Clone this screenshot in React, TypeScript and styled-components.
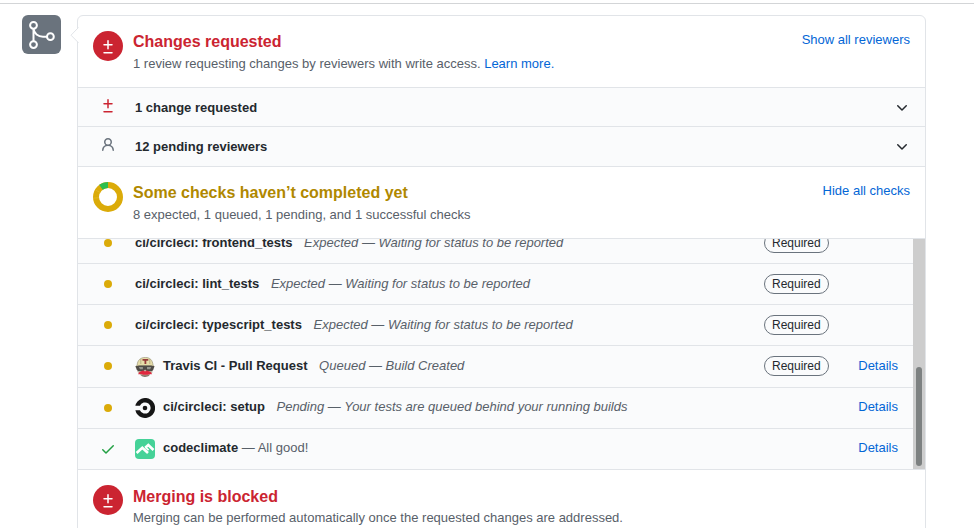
import React from "react";
import styled, { createGlobalStyle } from "styled-components";

const GlobalStyle = createGlobalStyle`
  body {
    margin: 0;
    background: #fff;
    color: #24292e;
    font: 13px/20px "Liberation Sans", Arial, sans-serif;
    overflow: hidden;
  }
  *, *::before, *::after { box-sizing: border-box; }
  svg { display: block; flex: none; }
`;

const Page = styled.main`
  height: 528px;
  padding-top: 3px;
  overflow: hidden;
`;

const TopRule = styled.div`
  height: 1px;
  background: #d3d5d7;
`;

const Timeline = styled.div`
  display: flex;
  align-items: flex-start;
  padding: 11px 48px 0 22px;
`;

const MergeBadge = styled.div`
  width: 39px;
  height: 39px;
  margin-right: 16px;
  border-radius: 6px;
  background: #6a737d;
`;

const Box = styled.section`
  position: relative;
  width: 849px;
  height: 600px;
  flex: none;
  border: 1px solid #e1e4e8;
  border-radius: 6px;
`;

const Caret = styled.svg`
  position: absolute;
  left: -8px;
  top: 11px;
`;

const Header = styled.header<{ $height: number }>`
  display: flex;
  height: ${(p) => p.$height}px;
  padding: 15px 15px 0;
  border-bottom: 1px solid #e1e4e8;
`;

const StatusCircle = styled.div`
  display: flex;
  justify-content: center;
  width: 30px;
  height: 30px;
  padding-top: 8px;
  border-radius: 50%;
  background: #cb2431;
  color: #fff;
`;

const HeaderText = styled.div`
  flex: 1;
  margin-left: 10px;
`;

const Title = styled.h3<{ $color: string; $line?: number }>`
  height: 22px;
  margin: 0;
  font-size: 16px;
  line-height: ${(p) => p.$line ?? 22}px;
  font-weight: 700;
  color: ${(p) => p.$color};
`;

const Subtitle = styled.p`
  margin: 0;
  line-height: 21px;
  color: #586069;
`;

const Link = styled.a`
  color: #0366d6;
  text-decoration: none;
`;

const HeaderLink = styled(Link)`
  line-height: 18px;
`;

const ReviewRow = styled.div<{ $height: number }>`
  display: flex;
  height: ${(p) => p.$height}px;
  padding: 10px 15px 0 22px;
  background: #fafbfc;
  border-bottom: 1px solid #e1e4e8;
`;

const ReviewLabel = styled.strong`
  flex: 1;
  margin-left: 19px;
`;

const ChevronSlot = styled.span`
  padding-top: 1px;
`;

const ChecksViewport = styled.div`
  display: flex;
  height: 231px;
  overflow: hidden;
  border-bottom: 1px solid #e1e4e8;
`;

const CheckList = styled.div`
  display: flex;
  flex: 1;
  flex-direction: column;
  justify-content: flex-end;
  background: #fafbfc;
`;

const CheckRow = styled.div<{ $height: number; $line: number }>`
  display: flex;
  flex: none;
  height: ${(p) => p.$height}px;
  padding: 10px 15px 0 22px;
  line-height: ${(p) => p.$line}px;
  border-bottom: 1px solid #e1e4e8;
  &:last-child { border-bottom: 0; }
`;

const StateIcon = styled.span`
  width: 16px;
  margin-right: 19px;
  padding-top: 2px;
`;

const Avatar = styled.span<{ $drop: number }>`
  width: 20px;
  margin-right: 8px;
  padding-top: ${(p) => p.$drop}px;
`;

const CheckText = styled.span`
  flex: 1;
  color: #586069;
  white-space: pre;
`;

const CheckName = styled.strong`
  color: #24292e;
`;

const Description = styled.em`
  margin-left: 11.6px;
`;

const Required = styled.span`
  width: 65px;
  height: 20px;
  padding-left: 7px;
  border: 1px solid #6a737d;
  border-radius: 10px;
  font-size: 12px;
  line-height: 18px;
`;

const DetailsSlot = styled.span`
  width: 69px;
  text-align: right;
`;

const ScrollTrack = styled.div`
  width: 12px;
  padding: 128px 0 0 3px;
  background: #cdcdcd;
`;

const ScrollThumb = styled.div`
  width: 6px;
  height: 99px;
  border-radius: 3px;
  background: #7d8181;
`;

const Octicon = ({ d, color = "currentColor" }: { d: string; color?: string }) => (
  <svg width="16" height="16" viewBox="0 0 16 16" fill={color}>
    <path fillRule="evenodd" d={d} />
  </svg>
);

const DIFF =
  "M8.75 1.75a.75.75 0 00-1.5 0V5H4a.75.75 0 000 1.5h3.25v3.25a.75.75 0 001.5 0V6.5H12A.75.75 0 0012 5H8.75V1.75zM4 13a.75.75 0 000 1.5h8a.75.75 0 100-1.5H4z";
const PERSON =
  "M10.5 5a2.5 2.5 0 11-5 0 2.5 2.5 0 015 0zm.061 3.073a4 4 0 10-5.123 0 6.004 6.004 0 00-3.431 5.142.75.75 0 001.498.07 4.5 4.5 0 018.99 0 .75.75 0 101.498-.07 6.005 6.005 0 00-3.432-5.142z";
const CHEVRON =
  "M12.78 6.22a.75.75 0 010 1.06l-4.25 4.25a.75.75 0 01-1.06 0L3.22 7.28a.75.75 0 011.06-1.06L8 9.94l3.72-3.72a.75.75 0 011.06 0z";
const CHECK =
  "M13.78 4.22a.75.75 0 010 1.06l-7.25 7.25a.75.75 0 01-1.06 0L2.22 9.28a.75.75 0 011.06-1.06L6 10.94l6.72-6.72a.75.75 0 011.06 0z";
const DOT = "M8 4a4 4 0 100 8 4 4 0 000-8z";

const MergeIcon = () => (
  <svg width="39" height="39" viewBox="0 0 39 39" fill="none" stroke="#fff" strokeWidth="2">
    <circle cx="11.5" cy="10.3" r="3.4" />
    <circle cx="11.5" cy="29.6" r="3.4" />
    <circle cx="28.4" cy="21.7" r="3.4" />
    <path d="M11.5 13.7v12.5M11.5 13.7c.4 5 4.6 8 9.5 8h4" />
  </svg>
);

const Donut = () => (
  <svg width="30" height="30" viewBox="0 0 30 30" fill="none" strokeWidth="6">
    <circle cx="15" cy="15" r="12" stroke="#dbab09" />
    <path d="M7.95 5.29A12 12 0 0 1 15 3" stroke="#2cbe4e" />
    <path d="M0 16.2l6-.5M2.8 8.2l5 2.6" stroke="#e6c54e" strokeWidth=".4" />
  </svg>
);

const TravisLogo = () => (
  <svg width="20" height="20" viewBox="0 0 20 20">
    <path d="M2 8h16l-.7 7.3-3 3.2-4.4 1.3-4.6-1.6L2.5 14.8z" fill="#c3b5a2" />
    <path d="M2.2 8C2.4 3.2 5.6.4 10.3.4S17.6 3.2 18 8l1.2 2-3.8-1H5.1l-4.5 1z" fill="#e6dda9" stroke="#8d8668" strokeWidth=".6" />
    <path d="M5.8 2v5M14.8 2v5" stroke="#aaa17a" strokeWidth=".7" />
    <path d="M7.5 2.1h5.8v1.6h-2v3.4h-1.8V3.7h-2z" fill="#943c3a" />
    <path d="M.6 9.3l3.2-.8h12.6l3 .8-1.2 3.6-1.2 1-5 .3-1.9-1.7-2 1.7-5-.3-1.4-1.2z" fill="#4f4b47" />
    <path d="M3.8 10h4.1v2.3H5zM12 10h4.2l-1 2.3H12z" fill="#95958c" />
    <path d="M3 17.2l1.5-2.3 3.5-1.3 2.1.8 1.8-.8 3.7 1.3 1.6 2.3-2.3-.2-2.1.8H8.1l-2.3-.8z" fill="#e0283f" />
    <path d="M5.6 17.5l2.3.8h4.5l2.4-.8-1.5 1.7-3.4.7-3-.7z" fill="#827166" />
  </svg>
);

const CircleLogo = () => (
  <svg width="20" height="20" viewBox="0 0 20 20" fill="#161616">
    <path d="M.35 7.8A10 10 0 1 1 .35 12.2H4.9A5.6 5.6 0 1 0 4.9 7.8z" />
    <circle cx="10" cy="10" r="2.3" />
  </svg>
);

const ClimateLogo = () => (
  <svg width="20" height="20" viewBox="0 0 20 20">
    <rect width="20" height="20" rx="4" fill="#45d298" />
    <g fill="none" stroke="#fff" strokeWidth="2.6">
      <path d="M1.6 14l5.7-5.3 5.7 5.3" />
      <path d="M10.2 8.7l3.1-2.6 5.2 4.9" />
      <path d="M10.4 8.2l3.2 3" strokeWidth="1.8" />
    </g>
  </svg>
);

type Check = {
  name: string;
  note: string;
  height: number;
  logo?: React.ReactNode;
  required?: boolean;
  details?: boolean;
  done?: boolean;
};

const WAITING = "Expected — Waiting for status to be reported";

const checks: Check[] = [
  { name: "ci/circleci: frontend_tests", note: WAITING, height: 41, required: true },
  { name: "ci/circleci: lint_tests", note: WAITING, height: 41, required: true },
  { name: "ci/circleci: typescript_tests", note: WAITING, height: 41, required: true },
  { name: "Travis CI - Pull Request", note: "Queued — Build Created", height: 42, logo: <TravisLogo />, required: true, details: true },
  { name: "ci/circleci: setup", note: "Pending — Your tests are queued behind your running builds", height: 41, logo: <CircleLogo />, details: true },
  { name: "codeclimate", note: " — All good!", height: 40, logo: <ClimateLogo />, details: true, done: true },
];

const BlockedCircle = () => (
  <StatusCircle>
    <Octicon d={DIFF} />
  </StatusCircle>
);

export default function App() {
  return (
    <Page>
      <GlobalStyle />
      <TopRule />
      <Timeline>
        <MergeBadge>
          <MergeIcon />
        </MergeBadge>
        <Box>
          <Caret width="9" height="17" viewBox="0 0 9 17">
            <path d="M8.5 .5L1 8.2l7.5 7.6" fill="#fff" stroke="#e1e4e8" />
          </Caret>
          <Header $height={72}>
            <BlockedCircle />
            <HeaderText>
              <Title $color="#cb2431">Changes requested</Title>
              <Subtitle>
                1 review requesting changes by reviewers with write access. <Link>Learn more.</Link>
              </Subtitle>
            </HeaderText>
            <HeaderLink>Show all reviewers</HeaderLink>
          </Header>
          <ReviewRow $height={39}>
            <Octicon d={DIFF} color="#cb2431" />
            <ReviewLabel>1 change requested</ReviewLabel>
            <ChevronSlot>
              <Octicon d={CHEVRON} />
            </ChevronSlot>
          </ReviewRow>
          <ReviewRow $height={40}>
            <Octicon d={PERSON} color="#6a737d" />
            <ReviewLabel>12 pending reviewers</ReviewLabel>
            <ChevronSlot>
              <Octicon d={CHEVRON} />
            </ChevronSlot>
          </ReviewRow>
          <Header $height={72}>
            <Donut />
            <HeaderText>
              <Title $color="#b08800">Some checks haven’t completed yet</Title>
              <Subtitle>8 expected, 1 queued, 1 pending, and 1 successful checks</Subtitle>
            </HeaderText>
            <HeaderLink>Hide all checks</HeaderLink>
          </Header>
          <ChecksViewport>
            <CheckList>
              {checks.map((c) => (
                <CheckRow key={c.name} $height={c.height} $line={c.logo && !c.required ? 17 : 19}>
                  <StateIcon>
                    {c.done ? <Octicon d={CHECK} color="#22a043" /> : <Octicon d={DOT} color="#dbab09" />}
                  </StateIcon>
                  {c.logo && <Avatar $drop={c.required ? 1 : 0}>{c.logo}</Avatar>}
                  <CheckText>
                    <CheckName>{c.name}</CheckName>
                    {c.done ? c.note : <Description>{c.note}</Description>}
                  </CheckText>
                  {c.required && <Required>Required</Required>}
                  <DetailsSlot>{c.details && <Link>Details</Link>}</DetailsSlot>
                </CheckRow>
              ))}
            </CheckList>
            <ScrollTrack>
              <ScrollThumb />
            </ScrollTrack>
          </ChecksViewport>
          <Header $height={80}>
            <BlockedCircle />
            <HeaderText>
              <Title $color="#cb2431" $line={24}>Merging is blocked</Title>
              <Subtitle>Merging can be performed automatically once the requested changes are addressed.</Subtitle>
            </HeaderText>
          </Header>
        </Box>
      </Timeline>
    </Page>
  );
}
